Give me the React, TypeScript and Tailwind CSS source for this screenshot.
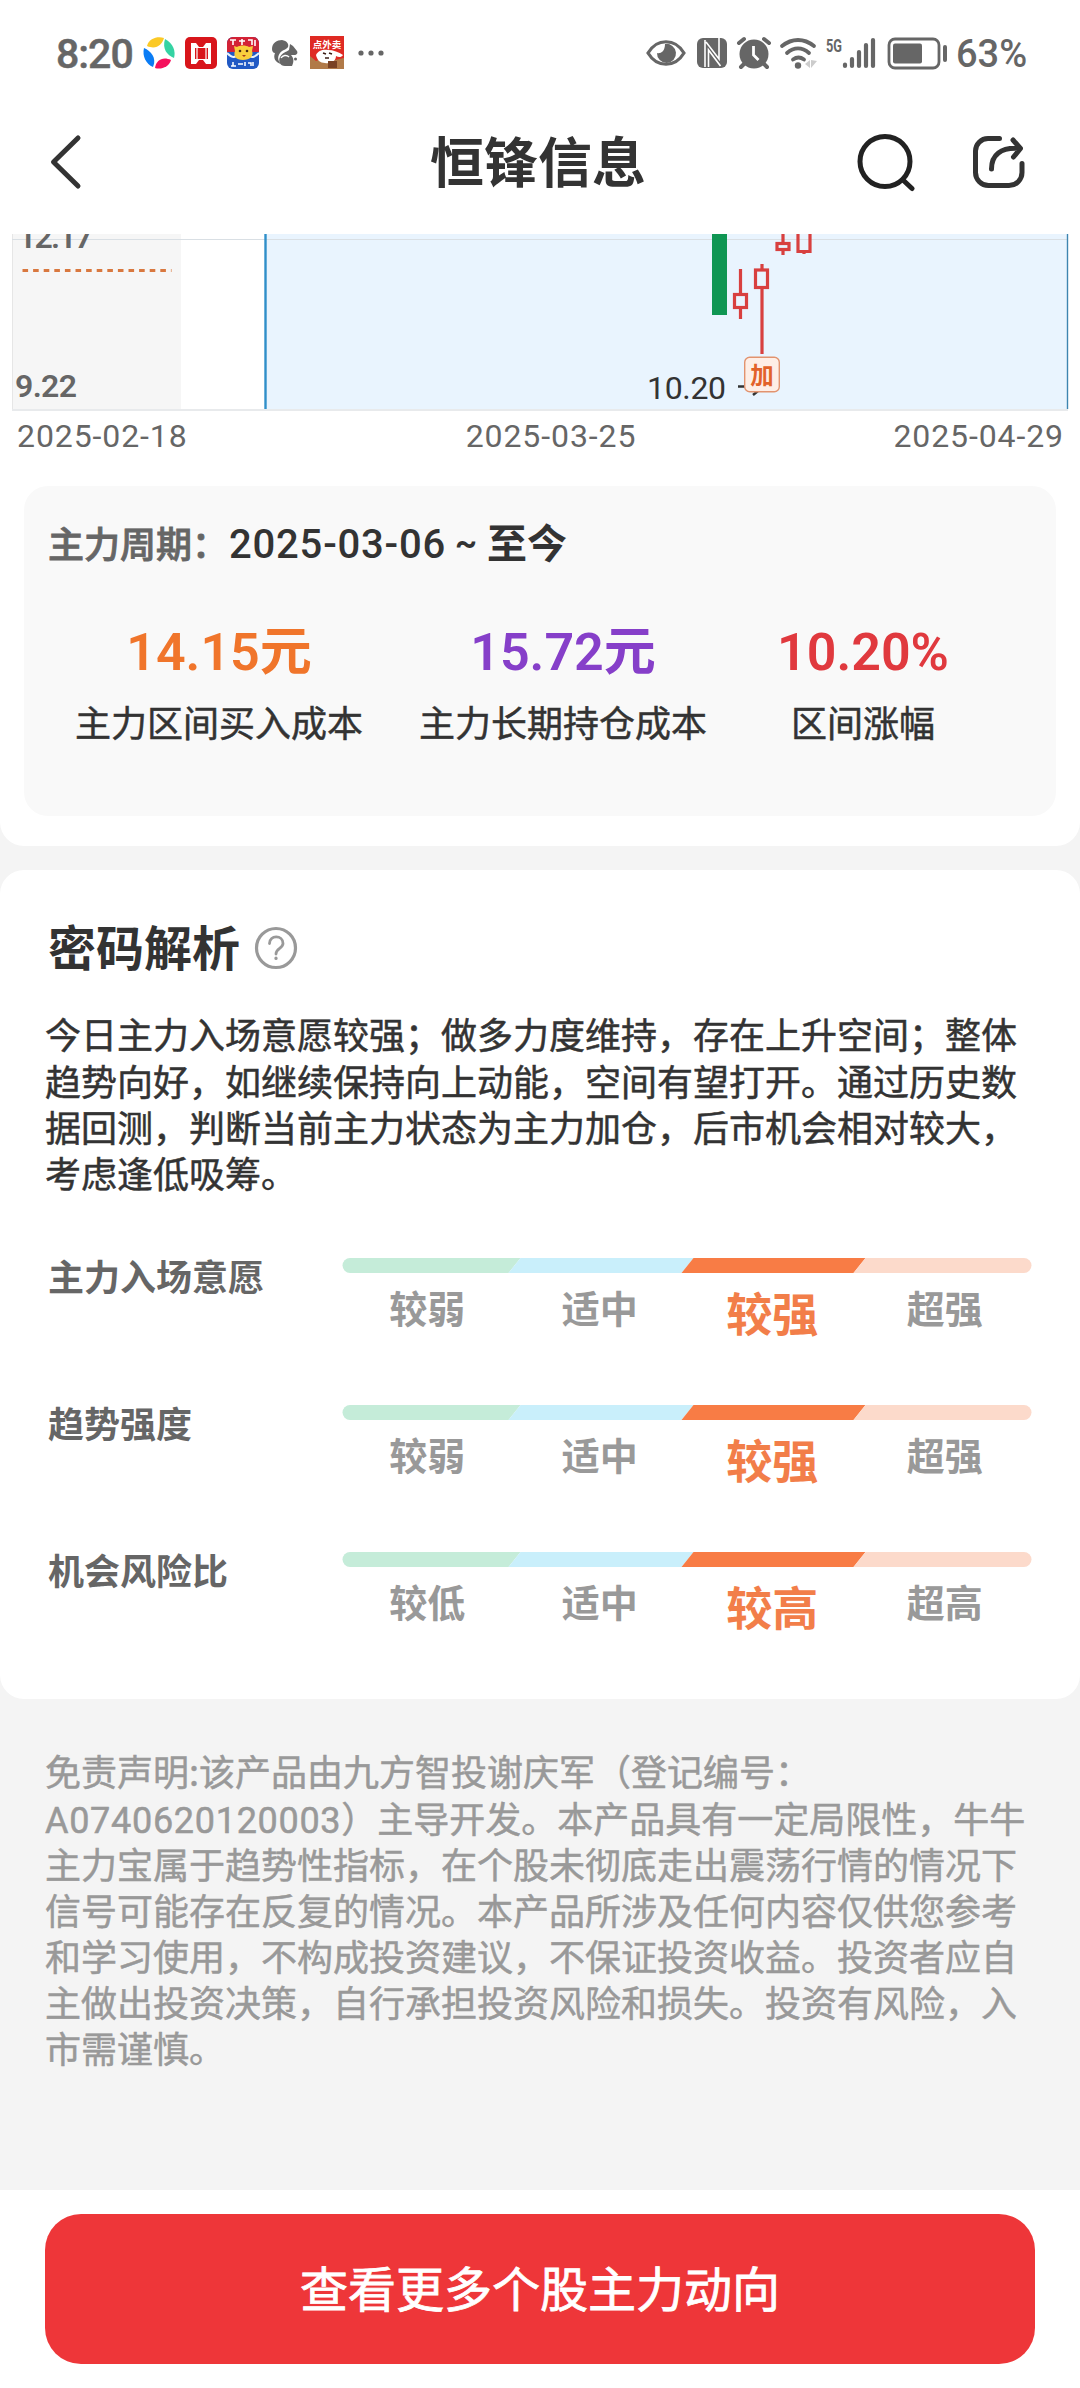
interface Level {
  title: string;
  labels: string[];
}

interface Cost {
  value: string;
  unit?: string;
  label: string;
  color: string;
  width: string;
}

const levels: Level[] = [
  { title: '主力入场意愿', labels: ['较弱', '适中', '较强', '超强'] },
  { title: '趋势强度', labels: ['较弱', '适中', '较强', '超强'] },
  { title: '机会风险比', labels: ['较低', '适中', '较高', '超高'] },
];

const costs: Cost[] = [
  { value: '14.15', unit: '元', label: '主力区间买入成本', color: 'text-[#f0752b]', width: 'w-[288px]' },
  { value: '15.72', unit: '元', label: '主力长期持仓成本', color: 'text-[#863fc9]', width: 'w-[288px]' },
  { value: '10.20%', label: '区间涨幅', color: 'text-[#e0393e]', width: 'w-[200px]' },
];

const analysis = [
  '今日主力入场意愿较强；做多力度维持，存在上升空间；整体',
  '趋势向好，如继续保持向上动能，空间有望打开。通过历史数',
  '据回测，判断当前主力状态为主力加仓，后市机会相对较大，',
  '考虑逢低吸筹。',
];

const disclaimer = [
  '主力宝属于趋势性指标，在个股未彻底走出震荡行情的情况下',
  '信号可能存在反复的情况。本产品所涉及任何内容仅供您参考',
  '和学习使用，不构成投资建议，不保证投资收益。投资者应自',
  '主做出投资决策，自行承担投资风险和损失。投资有风险，入',
  '市需谨慎。',
];

function StatusBar() {
  return (
    <div className="h-[108px] flex items-start justify-between pl-[56px] pr-[50px] pt-[30px] text-[#666] font-['Roboto',sans-serif] font-medium">
      <div className="flex items-center h-[46px]">
        <span className="w-[84px] pt-[2px] text-[41px] leading-[46px] tracking-[-1px] [-webkit-text-stroke:0.5px]">8:20</span>
        <svg width="248" height="46" viewBox="140 30 248 46">
          <g>
            <path d="M147 46 C149 38 158 36 164 38 C162 45 156 50 147 46Z" fill="#fbc926" />
            <path d="M165 39 C173 43 176 51 174 58 C167 55 162 49 165 39Z" fill="#35d3a3" />
            <path d="M171 60 C169 67 161 70 155 68 C156 60 163 56 171 60Z" fill="#f5115c" />
            <path d="M144 48 C151 51 157 58 153 67 C146 64 142 56 144 48Z" fill="#0a7cf5" />
          </g>
          <rect x="185" y="37" width="32" height="32" rx="5" fill="#d8151b" />
          <path d="M191 43h5l3 4h4l3-4h5v21h-5l-3-4h-4l-3 4h-5z" fill="#fff" />
          <path d="M195 48h13v11h-13z" fill="#d8151b" />
          <path d="M197 48v11M206 48v11" stroke="#fff" strokeWidth="1.200" />
          <path d="M199 42h4v5h-4zM199 60h4v5h-4z" fill="#d8151b" />
          <rect x="227" y="37" width="32" height="32" rx="6" fill="#2159c4" />
          <path d="M227 52v-9a6 6 0 0 1 6-6h20a6 6 0 0 1 6 6v9z" fill="#d32236" />
          <path d="M230 40h6M233 40v5M239 41h6M242 39v6M248 40h4v5M255 40v6" stroke="#fff" strokeWidth="1.6" fill="none" />
          <path d="M227 53c4 4 7 5 9 3M259 53c-4 4-7 5-9 3" stroke="#e8f2fb" strokeWidth="2" fill="none" />
          <path d="M234 46l3 1c3-2 9-2 12 0l4-1-1 5c2 5-2 9-9 9s-10-4-8-9z" fill="#f9cf3c" />
          <circle cx="240" cy="51" r="1.3" fill="#4b2b12" />
          <circle cx="247" cy="51" r="1.3" fill="#4b2b12" />
          <path d="M242 55h4l-2 2z" fill="#a33b1d" />
          <path d="M231 66h5M233 62v4M238 64h5M245 62v4M248 63h3v3M253 62v4" stroke="#fff" strokeWidth="1.5" fill="none" />
          <g fill="#666">
            <path d="M272 49c0-6 5-9 10-9 5 1 7 4 6 7-2 3-6 3-8 6-3 4-2 8 1 11-6-2-8-6-6-11-2 0-3-2-3-4z" />
            <path d="M289 50l1-6 3 2 4 5c1 2 0 4-3 4h-3c3 3 3 7 1 11h-7c-5 0-7-5-5-9s6-5 9-7z" />
            <circle cx="295.500" cy="59" r="1.500" />
          </g>
          <path d="M281 58a5 5 0 0 1 8-1" stroke="#fff" strokeWidth="1.4" fill="none" />
          <rect x="310" y="36" width="34" height="33" fill="#df2a23" />
          <path d="M310 69v-13l6 5 7-3 8 3 13-3v11z" fill="#b17a48" />
          <path d="M316 55c2-5 8-6 12-5 5 0 11 2 15 5-2 3-5 2-7 1 0 5-5 8-11 7-5 0-8-3-9-8z" fill="#fff" />
          <path d="M323 53l3 1M329 53l3 1M325 58h4" stroke="#3b1c14" strokeWidth="1.6" />
          <path d="M328 61h9v7h-9z" fill="#7a4224" />
          <text x="327" y="48" fontSize="9.500" fontWeight="700" fontFamily="Noto Sans CJK SC, sans-serif" textAnchor="middle" fill="#fff">点外卖</text>
          <circle cx="361" cy="53" r="2.600" fill="#666" />
          <circle cx="371" cy="53" r="2.600" fill="#666" />
          <circle cx="381" cy="53" r="2.600" fill="#666" />
        </svg>
      </div>
      <div className="flex items-center h-[46px]">
        <svg width="310" height="46" viewBox="645 30 310 46" fill="none" stroke="#666">
          <path d="M648 53c9-15 27-15 36 0c-9 15-27 15-36 0z" strokeWidth="3.200" />
          <path d="M665 44a9.500 9.500 0 1 1-8 9c3 1 8-1 8-9z" fill="#666" stroke="none" />
          <rect x="697" y="38" width="30" height="30" rx="6" fill="#666" stroke="none" />
          <path d="M705 67V40M706 42l13 17V48M708.500 67V50l12 16M719 38v21" stroke="#fff" strokeWidth="1.600" />
          <circle cx="754" cy="54" r="14.500" fill="#666" stroke="none" />
          <path d="M739 43l5-4M764 39l5 4M745 63l-4 4M763 63l4 4" strokeWidth="4" strokeLinecap="round" />
          <path d="M753.500 46v9l5 5" stroke="#fff" strokeWidth="2.800" />
          <path d="M782 46c10-8 22-8 32 0M787 53c7-6 15-6 22 0M793 59.500c4-3 7-3 11 0" strokeWidth="3.800" strokeLinecap="round" />
          <circle cx="798" cy="65.500" r="3.200" fill="#666" stroke="none" />
          <path d="M805 64l5-4v8M811 60v8l6-7z" fill="#ccc" stroke="none" />
          <text x="826" y="51.500" fontSize="18" fontWeight="700" fontFamily="Roboto, sans-serif" textLength="16" lengthAdjust="spacingAndGlyphs" fill="#666" stroke="none">5G</text>
          <path d="M845 64.500v1.500M852 59v7M859 52v14M866 45v21M873 40v26" strokeWidth="4.200" strokeLinecap="round" />
          <rect x="889" y="39" width="50" height="29" rx="6" strokeWidth="2.800" />
          <rect x="893" y="43.500" width="29" height="20" rx="2" fill="#666" stroke="none" />
          <path d="M945 47v13" strokeWidth="4" strokeLinecap="round" />
        </svg>
        <span className="w-[75px] pl-px pt-[2px] text-[38px] leading-[46px]">63%</span>
      </div>
    </div>
  );
}

function Header() {
  return (
    <header className="h-[126px] grid grid-cols-[1fr_auto_1fr] items-center pl-[46px] pr-[50px] pb-[18px]">
      <svg width="40" height="60" viewBox="46 132 40 60" fill="none" stroke="#333" strokeWidth="5" strokeLinecap="round" strokeLinejoin="round">
        <path d="M78 138L53.500 162L78 186" />
      </svg>
      <h1 className="text-[54px] leading-[70px] pb-[5px] font-bold text-[#333]">恒锋信息</h1>
      <div className="flex justify-end">
        <svg width="176" height="60" viewBox="854 132 176 60" fill="none" stroke="#333" strokeWidth="5" strokeLinecap="round" strokeLinejoin="round">
          <circle cx="885" cy="161.500" r="25" stroke="#222" />
          <path d="M903 180l9 8.500" stroke="#222" />
          <path d="M999.500 138.500H988a12.500 12.500 0 0 0-12.500 12.500v21.500a13 13 0 0 0 13 13h20.500a13 13 0 0 0 13-13V163.500" />
          <path d="M991.500 169c0-14 9-22 28-20.500M1013 140l7.500 8.500l-7 8.500" />
        </svg>
      </div>
    </header>
  );
}

function Chart() {
  return (
    <div>
      <svg width="1080" height="178" viewBox="0 234 1080 178" className="block" fontFamily="Roboto, sans-serif">
        <rect x="12" y="234" width="169" height="176" fill="#f6f6f6" />
        <rect x="265" y="234" width="803" height="176" fill="#e9f4fe" />
        <path d="M12.500 234v176" stroke="#e6e6e6" />
        <path d="M12 239.500h1055" stroke="#d9dfe4" strokeWidth="1" />
        <path d="M12 410h1056" stroke="#e8eaec" strokeWidth="2" />
        <path d="M265.500 234v175" stroke="#2f8fc9" strokeWidth="2.400" />
        <path d="M1067.500 234v175" stroke="#3d85b0" strokeWidth="1.400" />
        <path d="M22.500 270.500h149" stroke="#d9783f" strokeWidth="3" strokeDasharray="5.600 5" />
        <text x="18" y="248" fontSize="32" fontWeight="600" fill="#666" textLength="75">12.17</text>
        <text x="15" y="397" fontSize="32" fontWeight="600" fill="#666" textLength="62">9.22</text>
        <rect x="712" y="234" width="15" height="81" fill="#0f9653" />
        <g stroke="#d8403f" strokeWidth="3.200" fill="none">
          <path d="M740.500 269v24M740.500 309v10" />
          <rect x="734.500" y="294.500" width="12" height="13" />
          <path d="M762 264v5M762 289v65" />
          <rect x="755.500" y="270" width="12" height="17.500" />
          <path d="M783 234v8M783 251v4" />
          <rect x="777" y="243.500" width="12" height="6" />
          <path d="M798 234v17.500h12V234M804 252v2" />
        </g>
        <text x="647" y="399" fontSize="32" fill="#333" textLength="79">10.20</text>
        <path d="M738 386.500h8M753 395l5-4" stroke="#333" strokeWidth="2.500" />
        <rect x="744.700" y="357.200" width="34.600" height="34.600" rx="5" fill="#feeee6" stroke="#e2936f" strokeWidth="1.400" />
        <text x="762" y="384" fontSize="23.500" fontWeight="700" fontFamily="Noto Sans CJK SC, sans-serif" fill="#e2622a" textAnchor="middle">加</text>
      </svg>
      <div className="h-[74px] pt-[4px] pl-[17px] pr-[16px] flex text-[32px] leading-[40px] tracking-[0.9px] text-[#666] font-['Roboto',sans-serif]">
        <span>2025-02-18</span>
        <span className="ml-auto mr-auto pl-[21px]">2025-03-25</span>
        <span>2025-04-29</span>
      </div>
    </div>
  );
}

function LevelRow({ title, labels }: Level) {
  return (
    <div className="h-[147px] flex">
      <div className="w-[294px] mt-[-2px] text-[36px] leading-[38px] font-bold text-[#666]">{title}</div>
      <div className="w-[690px]">
        <svg width="690" height="15" viewBox="0 0 690 15" className="block">
          <path d="M8 0h170.500l-12 15H8a7.500 7.500 0 0 1 0-15z" fill="#c5ecd9" />
          <path d="M178.500 0h173l-12 15h-173z" fill="#c9effb" />
          <path d="M351.500 0h172l-12 15h-172z" fill="#f87c45" />
          <path d="M523.500 0H682a7.500 7.500 0 0 1 0 15H511.500z" fill="#fcdacb" />
        </svg>
        <div className="grid grid-cols-4 text-center text-[#999] font-bold ml-[-1px] w-[690px]">
          {labels.map((label, i) => (
            <span
              key={label}
              className={i === 2 ? 'text-[46px] leading-[76px] text-[#f27e49]' : 'text-[38px] leading-[67px]'}
            >
              {label}
            </span>
          ))}
        </div>
      </div>
    </div>
  );
}

export default function App() {
  return (
    <div className="w-[1080px] h-[2388px] overflow-hidden flex flex-col bg-[#f4f4f4] text-[#333] whitespace-nowrap font-['Noto_Sans_CJK_SC',sans-serif]">
      <div className="h-[846px] bg-white rounded-b-[24px]">
        <StatusBar />
        <Header />
        <Chart />
        <section className="mx-6 h-[330px] rounded-[24px] bg-[#f9f9f9] px-6 pt-[30px]">
          <div className="flex items-center h-[56px] font-medium">
            <span className="w-[181px] pb-[4px] text-[36px] text-[#666] [-webkit-text-stroke:0.8px]">主力周期：</span>
            <span className="text-[40px] pt-[2px] tracking-[0.8px] font-['Roboto',sans-serif]">2025-03-06</span>
            <span className="ml-[9px] text-[34px] pb-[3px] font-bold font-['Roboto',sans-serif]">~</span>
            <span className="ml-[10px] text-[40px] pb-[7px] font-bold">至今</span>
          </div>
          <div className="mt-[44px] ml-[27px] flex gap-[56px] text-center">
            {costs.map(cost => (
              <div key={cost.label} className={cost.width}>
                <div className={`text-[52px] leading-[64px] font-bold ${cost.color}`}>
                  <span className="font-['Roboto',sans-serif] font-semibold leading-none">{cost.value}</span>
                  {cost.unit}
                </div>
                <div className="mt-[16px] text-[36px] leading-[50px] [-webkit-text-stroke:0.5px]">{cost.label}</div>
              </div>
            ))}
          </div>
        </section>
      </div>

      <section className="mt-6 h-[829px] bg-white rounded-[24px] pt-[42px]">
        <div className="flex items-center h-[72px] pl-[48px]">
          <h2 className="text-[48px] leading-[64px] pb-[6px] font-bold">密码解析</h2>
          <svg width="44" height="44" viewBox="0 0 44 44" className="ml-[14px]" fill="none" stroke="#999" strokeWidth="2.800" strokeLinecap="round">
            <circle cx="22" cy="22" r="19.500" strokeWidth="3.200" />
            <path d="M15.500 17.500c0-9 13.500-8.500 13.500 0c0 5-7 5-7 10.500" />
            <path d="M22 32v.5" strokeWidth="3.200" />
          </svg>
        </div>
        <p className="pl-[45px] mt-[26px] text-[36px] leading-[46px] [-webkit-text-stroke:0.5px]">
          {analysis.map(line => <span key={line} className="block first:pb-px">{line}</span>)}
        </p>
        <div className="pl-[48px] mt-[63px]">
          {levels.map(level => <LevelRow key={level.title} {...level} />)}
        </div>
      </section>

      <p className="pl-[45px] mt-[48px] text-[36px] leading-[46px] text-[#999] [-webkit-text-stroke:0.5px]">
        <span className="block pb-px">免责声明:该产品由九方智投谢庆军（登记编号：</span>
        <span className="block"><span className="font-['Roboto',sans-serif] leading-none tracking-[0.7px]">A0740620120003</span>）主导开发。本产品具有一定局限性，牛牛</span>
        {disclaimer.map(line => <span key={line} className="block">{line}</span>)}
      </p>

      <footer className="mt-auto h-[198px] bg-white px-[45px] pt-6">
        <button className="w-full h-[150px] rounded-[36px] bg-[#ee3639] text-white text-[48px] pb-[7px] [-webkit-text-stroke:0.8px]">
          查看更多个股主力动向
        </button>
      </footer>
    </div>
  );
}
